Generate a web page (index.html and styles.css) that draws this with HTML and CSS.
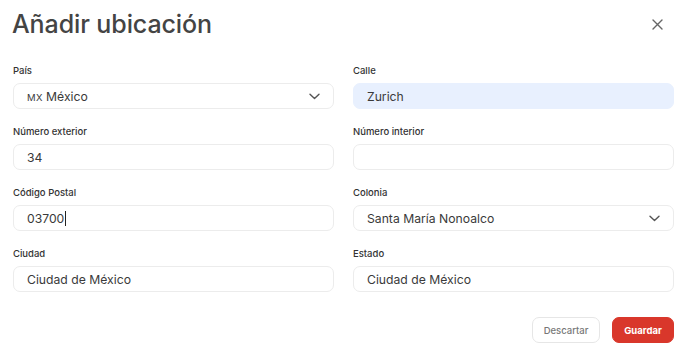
FILE: index.html
```html
<!DOCTYPE html>
<html lang="es">
<head>
<meta charset="utf-8">
<link rel="stylesheet" href="styles.css">
</head>
<body>
<div class="modal">
  <div class="header">
    <h1 class="title">Añadir ubicación</h1>
    <button class="close" aria-label="Cerrar">
      <svg width="11" height="11" viewBox="0 0 11 11"><path d="M1 1L10 10M10 1L1 10" stroke="#666" stroke-width="1.4" stroke-linecap="round"/></svg>
    </button>
  </div>
  <form class="grid">
    <div class="field">
      <label class="label">País</label>
      <div class="input select"><span><span class="cc">MX</span> México</span>
        <svg class="chev" width="11" height="7" viewBox="0 0 11 7"><path d="M1 1.2L5.5 5.5L10 1.2" fill="none" stroke="#555" stroke-width="1.4" stroke-linecap="round" stroke-linejoin="round"/></svg>
      </div>
    </div>
    <div class="field">
      <label class="label">Calle</label>
      <div class="input autofill">Zurich</div>
    </div>
    <div class="field">
      <label class="label">Número exterior</label>
      <div class="input">34</div>
    </div>
    <div class="field">
      <label class="label">Número interior</label>
      <div class="input"></div>
    </div>
    <div class="field">
      <label class="label">Código Postal</label>
      <div class="input">03700<span class="caret"></span></div>
    </div>
    <div class="field">
      <label class="label">Colonia</label>
      <div class="input select"><span>Santa María Nonoalco</span>
        <svg class="chev" width="11" height="7" viewBox="0 0 11 7"><path d="M1 1.2L5.5 5.5L10 1.2" fill="none" stroke="#555" stroke-width="1.4" stroke-linecap="round" stroke-linejoin="round"/></svg>
      </div>
    </div>
    <div class="field">
      <label class="label">Ciudad</label>
      <div class="input">Ciudad de México</div>
    </div>
    <div class="field">
      <label class="label">Estado</label>
      <div class="input">Ciudad de México</div>
    </div>
  </form>
  <div class="actions">
    <button class="btn secondary">Descartar</button>
    <button class="btn primary">Guardar</button>
  </div>
</div>
</body>
</html>
```
FILE: styles.css
```css
* { box-sizing: border-box; }
html, body { margin: 0; background: #fff; }
body {
  font-family: Inter, "Noto Sans", sans-serif;
  color: #333;
}
.modal {
  width: 688px;
  padding: 0 13px 0 13px;
}
.header {
  height: 46px;
  display: flex;
  align-items: center;
  justify-content: space-between;
  padding-top: 2px;
}
.title {
  margin: 0 0 0 -1px;
  font-size: 25px;
  font-weight: 500;
  color: #444;
  letter-spacing: -0.1px;
}
.close {
  border: 0;
  background: none;
  padding: 0;
  width: 11px;
  height: 11px;
  margin-right: 12px;
  display: flex;
}
.grid {
  display: grid;
  grid-template-columns: 321px 321px;
  column-gap: 19px;
  row-gap: 17px;
  margin: 19px 0 0 0;
}
.field {
  display: flex;
  flex-direction: column;
  gap: 6px;
}
.label {
  font-size: 9.5px;
  line-height: 12px;
  font-weight: 500;
  color: #333;
}
.input {
  height: 26px;
  border: 1px solid #ececec;
  border-radius: 7px;
  padding: 0 13px;
  display: flex;
  align-items: center;
  font-size: 12.2px;
  color: #3a3a3a;
}
.autofill {
  background: #e8f0fe;
  border-color: #e8f0fe;
}
.select { justify-content: space-between; padding-right: 13px; }
.cc { font-size: 9.5px; letter-spacing: 0.3px; }
.caret {
  display: inline-block;
  width: 1px;
  height: 15px;
  background: #222;
  margin-left: 1px;
}
.actions {
  display: flex;
  justify-content: flex-end;
  gap: 12px;
  margin-top: 25px;
  padding-right: 1px;
}
.btn {
  height: 26px;
  border-radius: 7px;
  font-family: Inter, "Noto Sans", sans-serif;
  font-size: 9.5px;
  padding: 0;
}
.secondary {
  width: 68px;
  background: #fff;
  border: 1px solid #e6e6e6;
  color: #777;
  font-weight: 500;
}
.primary {
  width: 62px;
  background: #d9372b;
  border: 1px solid #d9372b;
  color: #fff;
  font-weight: 700;
}
```
